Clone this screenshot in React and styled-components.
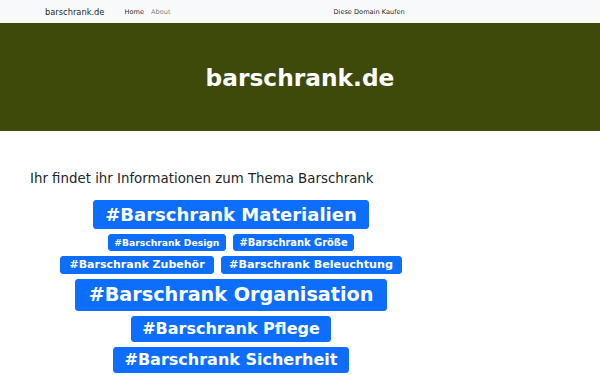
import React from "react"
import styled, { createGlobalStyle } from "styled-components"

const GlobalStyle = createGlobalStyle`
  html, body {
    margin: 0;
    padding: 0;
    background: #fff;
    font-family: "DejaVu Sans", "Noto Sans", sans-serif;
    color: #212529;
  }
`

const Navbar = styled.nav`
  display: flex;
  align-items: center;
  height: 23px;
  padding-left: 45px;
  background-color: #f8f9fa;
  box-sizing: border-box;
`

const Brand = styled.a`
  font-size: 8.3px;
  color: rgba(0, 0, 0, 0.9);
  text-decoration: none;
  margin-right: 20px;
`

const NavLinks = styled.div`
  display: flex;
  gap: 7px;
`

const NavLink = styled.a`
  font-size: 6.6px;
  color: ${props => props.active ? "rgba(0, 0, 0, 0.9)" : "rgba(0, 0, 0, 0.55)"};
  text-decoration: none;
`

const BuyLink = styled(NavLink)`
  margin-left: 163px;
  color: rgba(0, 0, 0, 0.9);
`

const Hero = styled.header`
  display: flex;
  align-items: center;
  justify-content: center;
  height: 108px;
  background-color: #3d4a09;
`

const HeroTitle = styled.h1`
  margin: 0;
  font-size: 23.3px;
  font-weight: bold;
  color: #fff;
`

const Main = styled.main`
  padding: 0 30px;
`

const Intro = styled.p`
  margin: 38px 0 11px;
  font-size: 13.35px;
  line-height: 20px;
`

const TagCloud = styled.div`
  width: 402px;
  display: flex;
  flex-direction: column;
  gap: 5px;
`

const TagRow = styled.div`
  display: flex;
  justify-content: center;
  gap: 7px;
`

const Tag = styled.a`
  display: inline-block;
  box-sizing: border-box;
  height: ${props => props.h}px;
  line-height: ${props => props.h - 2}px;
  padding: 0 ${props => props.px}px;
  font-size: ${props => props.size}px;
  font-weight: bold;
  color: #fff;
  white-space: nowrap;
  text-decoration: none;
  background-color: #0d6efd;
  border: 1px solid #0d6efd;
  border-radius: 3px;
`

const rows = [
  [{ label: "#Barschrank Materialien", size: 18, px: 11, h: 29 }],
  [
    { label: "#Barschrank Design", size: 9.2, px: 5.5, h: 17 },
    { label: "#Barschrank Größe", size: 9.9, px: 5.5, h: 17 }
  ],
  [
    { label: "#Barschrank Zubehör", size: 11, px: 8, h: 18 },
    { label: "#Barschrank Beleuchtung", size: 11.2, px: 7.5, h: 18 }
  ],
  [{ label: "#Barschrank Organisation", size: 19.2, px: 12.5, h: 32 }],
  [{ label: "#Barschrank Pflege", size: 16, px: 10, h: 26 }],
  [{ label: "#Barschrank Sicherheit", size: 16, px: 10.5, h: 26 }]
]

export default function App() {
  return (
    <>
      <GlobalStyle />
      <Navbar>
        <Brand href="#">barschrank.de</Brand>
        <NavLinks>
          <NavLink href="#" active>Home</NavLink>
          <NavLink href="#">About</NavLink>
        </NavLinks>
        <BuyLink href="#">Diese Domain Kaufen</BuyLink>
      </Navbar>
      <Hero>
        <HeroTitle>barschrank.de</HeroTitle>
      </Hero>
      <Main>
        <Intro>Ihr findet ihr Informationen zum Thema Barschrank</Intro>
        <TagCloud>
          { rows.map((row, i) => (
            <TagRow key={ i }>
              { row.map(tag => (
                <Tag key={ tag.label } href="#" size={ tag.size } px={ tag.px } h={ tag.h }>
                  { tag.label }
                </Tag>
              )) }
            </TagRow>
          )) }
        </TagCloud>
      </Main>
    </>
  )
}
